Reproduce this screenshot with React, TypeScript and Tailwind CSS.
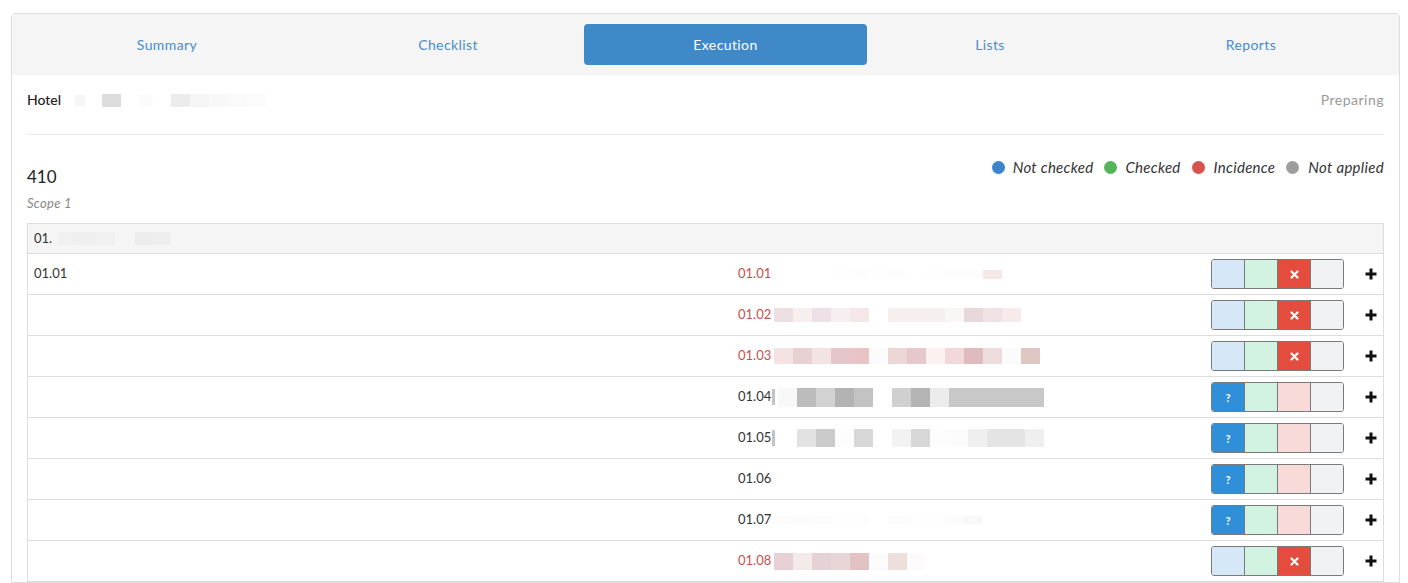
import React from "react";

type Status = "incidence" | "unchecked";

const tabs = [
  { label: "Summary", w: "w-[290px]", active: false },
  { label: "Checklist", w: "w-[272px]", active: false },
  { label: "Execution", w: "w-[283px]", active: true },
  { label: "Lists", w: "w-[246px]", active: false },
  { label: "Reports", w: "flex-1", active: false },
];

const rows: { code: string; red: boolean; status: Status; pix: string[]; gray?: boolean; h: string }[] = [
  { code: "01.01", red: true, status: "incidence", pix: ["#ffffff", "#ffffff", "#ffffff", "#fefefe", "#fdfdfd", "#fefefe", "#fdfdfd", "#ffffff", "#fefefe", "#fdfdfd", "#fdfdfd", "#f6e8e8", "#ffffff"], h: "h-[9px]" },
  { code: "01.02", red: true, status: "incidence", pix: ["#ede0e3", "#f7eeee", "#ede0e6", "#f6eef0", "#f5e6e8", "#ffffff", "#f6eeef", "#f7eef0", "#f6efef", "#fbf6f6", "#e8d7db", "#efe2e4", "#f6eaeb"], h: "h-[14px]" },
  { code: "01.03", red: true, status: "incidence", pix: ["#f4e3e3", "#e8d1d1", "#f4e3e3", "#e6c6cb", "#e9c4c4", "#fafbfa", "#ecd6d6", "#e6c8cb", "#fcf1f1", "#f3d8d9", "#e0bbbe", "#eddddd", "#fafbfa", "#e0c6c3"], h: "h-[16px]" },
  { code: "01.04", red: false, status: "unchecked", pix: ["#f8f8f8", "#bcbcbc", "#d2d2d2", "#b3b3b3", "#c3c3c3", "#ffffff", "#d0d0d0", "#b4b4b4", "#ececec", "#c8c8c8", "#c8c8c8", "#c8c8c8", "#c8c8c8", "#c8c8c8"], h: "h-[19px]", gray: true },
  { code: "01.05", red: false, status: "unchecked", pix: ["#ffffff", "#e2e2e2", "#cbcbcb", "#fdfdfd", "#d8d8d8", "#ffffff", "#f2f2f2", "#d8d8d8", "#fdfdfd", "#fcfcfc", "#efefef", "#e4e4e4", "#e4e4e4", "#efefef"], h: "h-[18px]", gray: true },
  { code: "01.06", red: false, status: "unchecked", pix: [], h: "h-[10px]" },
  { code: "01.07", red: false, status: "unchecked", pix: ["#fcfcfc", "#fbfbfb", "#fcfcfc", "#fdfdfd", "#fdfdfd", "#ffffff", "#fcfcfc", "#fdfdfd", "#fefefe", "#fbfbfb", "#f8f8f8"], h: "h-[10px]" },
  { code: "01.08", red: true, status: "incidence", pix: ["#e6d0d3", "#f5eaea", "#e6d2d5", "#e8d5d8", "#e3c2c4", "#fbfcfb", "#ede0dc", "#fdfbfb"], h: "h-[17px]" },
];

function Plus() {
  return (
    <svg width="12" height="12" viewBox="0 0 12 12" className="block">
      <rect x="4.5" y="0.5" width="3" height="11" fill="#111" />
      <rect x="0.5" y="4.5" width="11" height="3" fill="#111" />
    </svg>
  );
}

function Cross() {
  return (
    <svg width="9" height="9" viewBox="0 0 9 9" className="block">
      <path d="M1.5 1.5 L7.5 7.5 M7.5 1.5 L1.5 7.5" stroke="#fff" strokeWidth="2.2" strokeLinecap="round" />
    </svg>
  );
}

function StatusGroup({ status }: { status: Status }) {
  const unchecked = status === "unchecked";
  const inc = status === "incidence";
  return (
    <div className="flex h-[30px] overflow-hidden rounded-[3px] border border-[#7a7a7a]">
      <div
        className={`flex w-[33px] items-center justify-center border-r border-[#7a7a7a] ${
          unchecked ? "bg-[#2f8fd8]" : "bg-[#d6e7f7]"
        }`}
      >
        {unchecked && <span className="text-[11px] font-bold leading-none text-white">?</span>}
      </div>
      <div className="w-[33px] border-r border-[#7a7a7a] bg-[#d3f3e2]" />
      <div
        className={`flex w-[33px] items-center justify-center border-r border-[#7a7a7a] ${
          inc ? "bg-[#e44c3e]" : "bg-[#f8dad8]"
        }`}
      >
        {inc && <Cross />}
      </div>
      <div className="w-[32px] bg-[#f1f2f4]" />
    </div>
  );
}

function Pix({ colors, h }: { colors: string[]; h: string }) {
  return (
    <div className="ml-[3px] flex">
      {colors.map((c, i) => (
        <div key={i} className={`w-[19px] ${h}`} style={{ backgroundColor: c }} />
      ))}
    </div>
  );
}

export default function App() {
  return (
    <div className="h-[583px] w-[1408px] overflow-hidden bg-white font-[Lato,sans-serif] text-[#333]">
      <div className="ml-[11px] mt-[13px] w-[1389px] rounded-t-[4px] border border-[#dddddd]">
        {/* Tabs */}
        <div className="flex bg-[#f5f5f5] p-[10px]">
          {tabs.map((t) => (
            <div
              key={t.label}
              className={`${t.w} flex h-[41px] items-center justify-center rounded-[4px] pb-[1px] text-[14px] tracking-[0.4px] ${
                t.active ? "bg-[#3f89c9] text-white" : "text-[#4a8ccc]"
              }`}
            >
              {t.label}
            </div>
          ))}
        </div>

        {/* Body */}
        <div className="px-[15px] pt-[15px]">
          <div className="flex items-center justify-between pb-[24px]">
            <div className="flex items-center text-[14px] font-medium leading-[20px] text-[#222]">
              Hotel
              <div className="ml-[14px] flex items-center">
                <div className="h-[11px] w-[10px] bg-[#f6f6f6]" />
                <div className="ml-[17px] h-[13px] w-[19px] bg-[#dcdcdc]" />
                <div className="ml-[18px] h-[11px] w-[14px] bg-[#fbfbfb]" />
                <div className="ml-[18px] h-[13px] w-[19px] bg-[#ececec]" />
                <div className="h-[13px] w-[19px] bg-[#f5f5f5]" />
                <div className="h-[13px] w-[19px] bg-[#f8f8f8]" />
                <div className="h-[13px] w-[19px] bg-[#fafafa]" />
                <div className="h-[13px] w-[19px] bg-[#fcfcfc]" />
              </div>
            </div>
            <div className="text-[14px] leading-[20px] tracking-[0.5px] text-[#999]">Preparing</div>
          </div>
          <div className="border-t border-[#e8e8e8]" />

          <div className="flex items-start justify-between pt-[22px]">
            <div>
              <div className="pt-[8px] text-[17px] leading-[24px] text-[#222]">410</div>
              <div className="pt-[5px] text-[13px] italic leading-[18px] tracking-[0.3px] text-[#888]">Scope 1</div>
            </div>
            <div className="flex items-center pt-[-1px] text-[15px] italic leading-[20px] tracking-[0.3px] text-[#333]">
              <span className="mr-[8px] h-[13px] w-[13px] rounded-full bg-[#3a85cc]" />
              Not checked
              <span className="ml-[11px] mr-[8px] h-[13px] w-[13px] rounded-full bg-[#56b55a]" />
              Checked
              <span className="ml-[11px] mr-[9px] h-[13px] w-[13px] rounded-full bg-[#d9504c]" />
              Incidence
              <span className="ml-[11px] mr-[9px] h-[13px] w-[13px] rounded-full bg-[#9d9d9d]" />
              Not applied
            </div>
          </div>

          {/* Table */}
          <div className="mt-[11px] border-x border-t border-[#dddddd]">
            <div className="flex h-[30px] items-center border-b border-[#dddddd] bg-[#f5f5f5] pl-[6px] text-[13px] text-[#333]">
              01.
              <div className="ml-[6px] flex">
                <div className="h-[13px] w-[19px] bg-[#f0f0f0]" />
                <div className="h-[13px] w-[19px] bg-[#efefef]" />
                <div className="h-[13px] w-[19px] bg-[#f0f0f0]" />
                <div className="ml-[20px] h-[13px] w-[19px] bg-[#ededed]" />
                <div className="h-[13px] w-[17px] bg-[#eeeeee]" />
              </div>
            </div>
            {rows.map((r, i) => (
              <div key={r.code} className="flex h-[41px] items-center border-b border-[#dddddd] text-[13px]">
                <div className="w-[704px] pl-[6px] text-[#333]">{i === 0 ? "01.01" : ""}</div>
                <div className="flex flex-1 items-center pl-[6px]">
                  <span className={r.red ? "text-[#c4504e]" : "text-[#333]"}>{r.code}</span>
                  {r.gray && <div className="ml-[1px] h-[16px] w-[3px] bg-[#c4c4c4]" />}
                  <Pix colors={r.pix} h={r.h} />
                </div>
                <StatusGroup status={r.status} />
                <div className="flex w-[39px] items-center justify-end pr-[6px]">
                  <Plus />
                </div>
              </div>
            ))}
          </div>
        </div>
      </div>
    </div>
  );
}
